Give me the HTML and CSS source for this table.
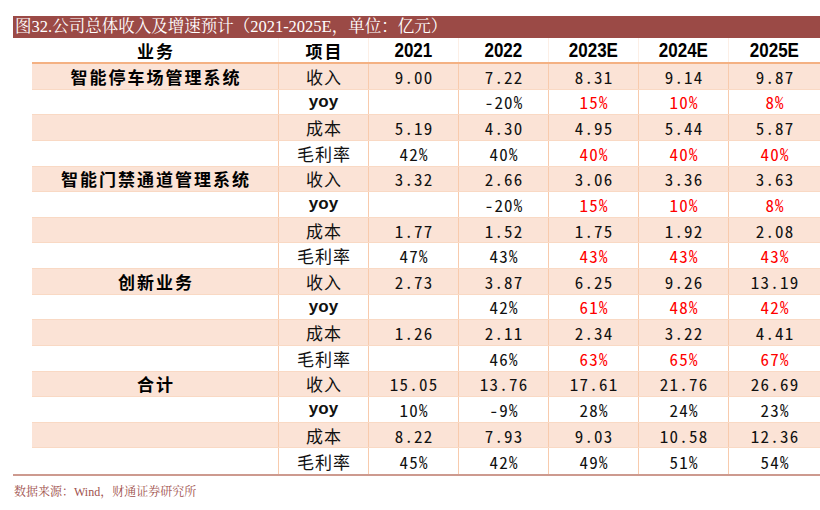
FILE: index.html
```html
<!DOCTYPE html>
<html lang="zh-CN">
<head>
<meta charset="utf-8">
<title>图32</title>
<link rel="stylesheet" href="styles.css">
</head>
<body>
<div class="page">
  <div class="title">图32.公司总体收入及增速预计（2021-2025E，单位：亿元）</div>
  <div class="tablewrap">
    <div class="grid">
      <div class="row head">
        <div class="cell hcn">业务</div>
        <div class="cell hcn">项目</div>
        <div class="cell"><span class="yr">2021</span></div>
        <div class="cell"><span class="yr">2022</span></div>
        <div class="cell"><span class="yr">2023E</span></div>
        <div class="cell"><span class="yr">2024E</span></div>
        <div class="cell"><span class="yr">2025E</span></div>
      </div>

      <div class="row pink">
        <div class="cell cat">智能停车场管理系统</div>
        <div class="cell lbl">收入</div>
        <div class="cell num">9.00</div>
        <div class="cell num">7.22</div>
        <div class="cell num">8.31</div>
        <div class="cell num">9.14</div>
        <div class="cell num">9.87</div>
      </div>
      <div class="row">
        <div class="cell cat"></div>
        <div class="cell yoy">yoy</div>
        <div class="cell num"></div>
        <div class="cell num">-20%</div>
        <div class="cell num red">15%</div>
        <div class="cell num red">10%</div>
        <div class="cell num red">8%</div>
      </div>
      <div class="row pink">
        <div class="cell cat"></div>
        <div class="cell lbl">成本</div>
        <div class="cell num">5.19</div>
        <div class="cell num">4.30</div>
        <div class="cell num">4.95</div>
        <div class="cell num">5.44</div>
        <div class="cell num">5.87</div>
      </div>
      <div class="row">
        <div class="cell cat"></div>
        <div class="cell lbl">毛利率</div>
        <div class="cell num">42%</div>
        <div class="cell num">40%</div>
        <div class="cell num red">40%</div>
        <div class="cell num red">40%</div>
        <div class="cell num red">40%</div>
      </div>

      <div class="row pink">
        <div class="cell cat">智能门禁通道管理系统</div>
        <div class="cell lbl">收入</div>
        <div class="cell num">3.32</div>
        <div class="cell num">2.66</div>
        <div class="cell num">3.06</div>
        <div class="cell num">3.36</div>
        <div class="cell num">3.63</div>
      </div>
      <div class="row">
        <div class="cell cat"></div>
        <div class="cell yoy">yoy</div>
        <div class="cell num"></div>
        <div class="cell num">-20%</div>
        <div class="cell num red">15%</div>
        <div class="cell num red">10%</div>
        <div class="cell num red">8%</div>
      </div>
      <div class="row pink">
        <div class="cell cat"></div>
        <div class="cell lbl">成本</div>
        <div class="cell num">1.77</div>
        <div class="cell num">1.52</div>
        <div class="cell num">1.75</div>
        <div class="cell num">1.92</div>
        <div class="cell num">2.08</div>
      </div>
      <div class="row">
        <div class="cell cat"></div>
        <div class="cell lbl">毛利率</div>
        <div class="cell num">47%</div>
        <div class="cell num">43%</div>
        <div class="cell num red">43%</div>
        <div class="cell num red">43%</div>
        <div class="cell num red">43%</div>
      </div>

      <div class="row pink">
        <div class="cell cat">创新业务</div>
        <div class="cell lbl">收入</div>
        <div class="cell num">2.73</div>
        <div class="cell num">3.87</div>
        <div class="cell num">6.25</div>
        <div class="cell num">9.26</div>
        <div class="cell num">13.19</div>
      </div>
      <div class="row">
        <div class="cell cat"></div>
        <div class="cell yoy">yoy</div>
        <div class="cell num"></div>
        <div class="cell num">42%</div>
        <div class="cell num red">61%</div>
        <div class="cell num red">48%</div>
        <div class="cell num red">42%</div>
      </div>
      <div class="row pink">
        <div class="cell cat"></div>
        <div class="cell lbl">成本</div>
        <div class="cell num">1.26</div>
        <div class="cell num">2.11</div>
        <div class="cell num">2.34</div>
        <div class="cell num">3.22</div>
        <div class="cell num">4.41</div>
      </div>
      <div class="row">
        <div class="cell cat"></div>
        <div class="cell lbl">毛利率</div>
        <div class="cell num"></div>
        <div class="cell num">46%</div>
        <div class="cell num red">63%</div>
        <div class="cell num red">65%</div>
        <div class="cell num red">67%</div>
      </div>

      <div class="row pink">
        <div class="cell cat">合计</div>
        <div class="cell lbl">收入</div>
        <div class="cell num">15.05</div>
        <div class="cell num">13.76</div>
        <div class="cell num">17.61</div>
        <div class="cell num">21.76</div>
        <div class="cell num">26.69</div>
      </div>
      <div class="row">
        <div class="cell cat"></div>
        <div class="cell yoy">yoy</div>
        <div class="cell num">10%</div>
        <div class="cell num">-9%</div>
        <div class="cell num">28%</div>
        <div class="cell num">24%</div>
        <div class="cell num">23%</div>
      </div>
      <div class="row pink">
        <div class="cell cat"></div>
        <div class="cell lbl">成本</div>
        <div class="cell num">8.22</div>
        <div class="cell num">7.93</div>
        <div class="cell num">9.03</div>
        <div class="cell num">10.58</div>
        <div class="cell num">12.36</div>
      </div>
      <div class="row last">
        <div class="cell cat"></div>
        <div class="cell lbl">毛利率</div>
        <div class="cell num">45%</div>
        <div class="cell num">42%</div>
        <div class="cell num">49%</div>
        <div class="cell num">51%</div>
        <div class="cell num">54%</div>
      </div>
    </div>
  </div>
  <div class="source">数据来源：Wind，财通证券研究所</div>
</div>
</body>
</html>
```

FILE: styles.css
```css
* { box-sizing: border-box; }

html, body {
  margin: 0;
  padding: 0;
  background: #ffffff;
}

.page {
  width: 820px;
  height: 510px;
  padding-top: 16px;
  font-family: "Noto Sans CJK SC", sans-serif;
  color: #111111;
}

.title {
  margin-left: 13px;
  height: 22px;
  line-height: 22px;
  padding-left: 2px;
  background: #9b4a46;
  color: #ffffff;
  font-family: "Liberation Serif", "Noto Serif CJK SC", "Noto Sans CJK SC", serif;
  font-size: 16.5px;
  white-space: nowrap;
  overflow: hidden;
}

.tablewrap {
  margin-left: 13px;
  padding-left: 19px;
  border-bottom: 2px solid #cd9a8f;
}

.grid {
  display: flex;
  flex-direction: column;
}

.row {
  display: grid;
  grid-template-columns: 247px repeat(5, 90px) 91px;
  height: 25.625px;
  border-bottom: 1px solid #f9d9c4;
}

.row.pink {
  background: #fbe3d6;
}

.row.last {
  border-bottom: none;
}

.row.head {
  height: 26px;
  border-bottom: 2px solid #f4b183;
  background: #ffffff;
}

.cell {
  display: flex;
  align-items: center;
  justify-content: center;
  border-right: 1px solid #f8cbad;
  white-space: nowrap;
  overflow: hidden;
}

.cell:last-child {
  border-right: none;
}

.row.head .cell {
  border-right: 1px solid #fcefe6;
}

.row.head .cell:last-child {
  border-right: none;
}

.hcn {
  font-weight: 700;
  font-size: 17px;
  letter-spacing: 2px;
  padding-left: 2px;
  color: #000000;
}

.yr {
  display: inline-block;
  font-family: "Liberation Sans", Arial, sans-serif;
  font-weight: 700;
  font-size: 21px;
  transform: scaleX(0.81);
  color: #000000;
}

.cat {
  font-weight: 700;
  font-size: 17px;
  letter-spacing: 2px;
  padding-left: 2px;
  color: #000000;
}

.lbl {
  font-size: 17px;
  letter-spacing: 1px;
  padding-left: 1px;
}

.yoy {
  font-family: "Liberation Sans", Arial, sans-serif;
  font-weight: 700;
  font-size: 17px;
}

.num {
  font-size: 17px;
  font-feature-settings: "hwid" 1;
  letter-spacing: 1.2px;
  padding-left: 1.2px;
}

.num.red {
  color: #ff0000;
}

.source {
  margin-left: 14px;
  margin-top: 6px;
  font-family: "Liberation Serif", "Noto Serif CJK SC", "Noto Sans CJK SC", serif;
  font-size: 12px;
  color: #a0504c;
  white-space: nowrap;
}
```
